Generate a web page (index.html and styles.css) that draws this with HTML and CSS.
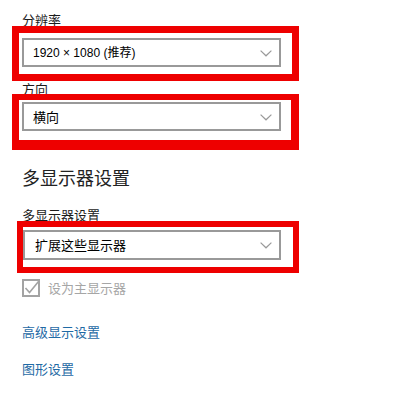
FILE: index.html
```html
<!DOCTYPE html>
<html lang="zh-CN">
<head>
<meta charset="utf-8">
<title>显示设置</title>
<link rel="stylesheet" href="styles.css">
</head>
<body>
<div class="page">
  <div class="label label-first">分辨率</div>
  <div class="mark mark-1">
    <div class="select">
      <span class="select-text select-text-latin">1920 × 1080 (推荐)</span>
      <svg class="chev" width="12" height="7" viewBox="0 0 12 7"><polyline points="0.6,0.6 6,5.8 11.4,0.6" fill="none" stroke="#9a9a9a" stroke-width="1.2"/></svg>
    </div>
  </div>

  <div class="label label-tight">方向</div>
  <div class="mark mark-2">
    <div class="select">
      <span class="select-text">横向</span>
      <svg class="chev" width="12" height="7" viewBox="0 0 12 7"><polyline points="0.6,0.6 6,5.8 11.4,0.6" fill="none" stroke="#9a9a9a" stroke-width="1.2"/></svg>
    </div>
  </div>

  <h2 class="heading">多显示器设置</h2>

  <div class="label label-multi">多显示器设置</div>
  <div class="mark mark-3">
    <div class="select select-wide">
      <span class="select-text">扩展这些显示器</span>
      <svg class="chev" width="12" height="7" viewBox="0 0 12 7"><polyline points="0.6,0.6 6,5.8 11.4,0.6" fill="none" stroke="#9a9a9a" stroke-width="1.2"/></svg>
    </div>
  </div>

  <div class="check-row">
    <svg class="check" width="18" height="18" viewBox="0 0 18 18">
      <rect x="1" y="1" width="16" height="16" fill="none" stroke="#a3a3a3" stroke-width="2"/>
      <polyline points="3.5,9 7.5,13.5 16.5,2.5" fill="none" stroke="#a3a3a3" stroke-width="1.6"/>
    </svg>
    <span class="check-text">设为主显示器</span>
  </div>

  <a class="link link-first" href="#">高级显示设置</a>
  <a class="link link-second" href="#">图形设置</a>
</div>
</body>
</html>
```

FILE: styles.css
```css
html, body {
  margin: 0;
  padding: 0;
  background: #ffffff;
}

body {
  font-family: "Noto Sans CJK SC", "Noto Sans", sans-serif;
  color: #1b1b1b;
}

.page {
  width: 418px;
  height: 400px;
  padding: 14px 0 0 12px;
  box-sizing: border-box;
  overflow: hidden;
}

.label {
  font-size: 13px;
  line-height: 12px;
  height: 12px;
  padding-left: 10px;
  color: #1b1b1b;
}

.label-tight {
  margin-top: 3px;
  line-height: 10px;
  height: 10px;
}

.label-multi {
  margin-top: 20px;
}

.mark {
  position: relative;
  border-style: solid;
  border-color: #ee0000;
  width: max-content;
}

.mark-1 {
  border-width: 7px;
  padding: 5px 11px 7px 3px;
}

.mark-2 {
  border-width: 6px 8px 10px 7px;
  padding: 2px 10px 9px 3px;
}

.mark-3 {
  margin-left: 5px;
  border-width: 6px;
  padding: 3px 12px 7px 0;
}

.select {
  width: 259px;
  height: 29px;
  box-sizing: border-box;
  border: 2px solid #999999;
  background: #ffffff;
  display: flex;
  align-items: center;
  justify-content: space-between;
  padding: 0 7px 0 9px;
}

.select-wide {
  width: 258px;
  height: 30px;
  padding-left: 10px;
}

.select-text {
  font-size: 13px;
  color: #000000;
  line-height: 16px;
}

.select-text-latin {
  font-family: "Liberation Sans", "Noto Sans CJK SC", sans-serif;
  font-size: 12px;
}

.chev {
  display: block;
  margin-top: 1px;
}

.heading {
  margin: 15px 0 0 10px;
  font-size: 18px;
  line-height: 24px;
  font-weight: normal;
  color: #222222;
}

.check-row {
  margin: 6px 0 0 10px;
  display: flex;
  align-items: center;
  gap: 8px;
  height: 18px;
}

.check {
  display: block;
}

.check-text {
  font-size: 13px;
  line-height: 16px;
  color: #a6a6a6;
}

.link {
  display: block;
  width: max-content;
  margin-left: 10px;
  font-size: 13px;
  line-height: 16px;
  color: #1f6aa5;
  text-decoration: none;
}

.link-first {
  margin-top: 27px;
}

.link-second {
  margin-top: 21px;
}
```
